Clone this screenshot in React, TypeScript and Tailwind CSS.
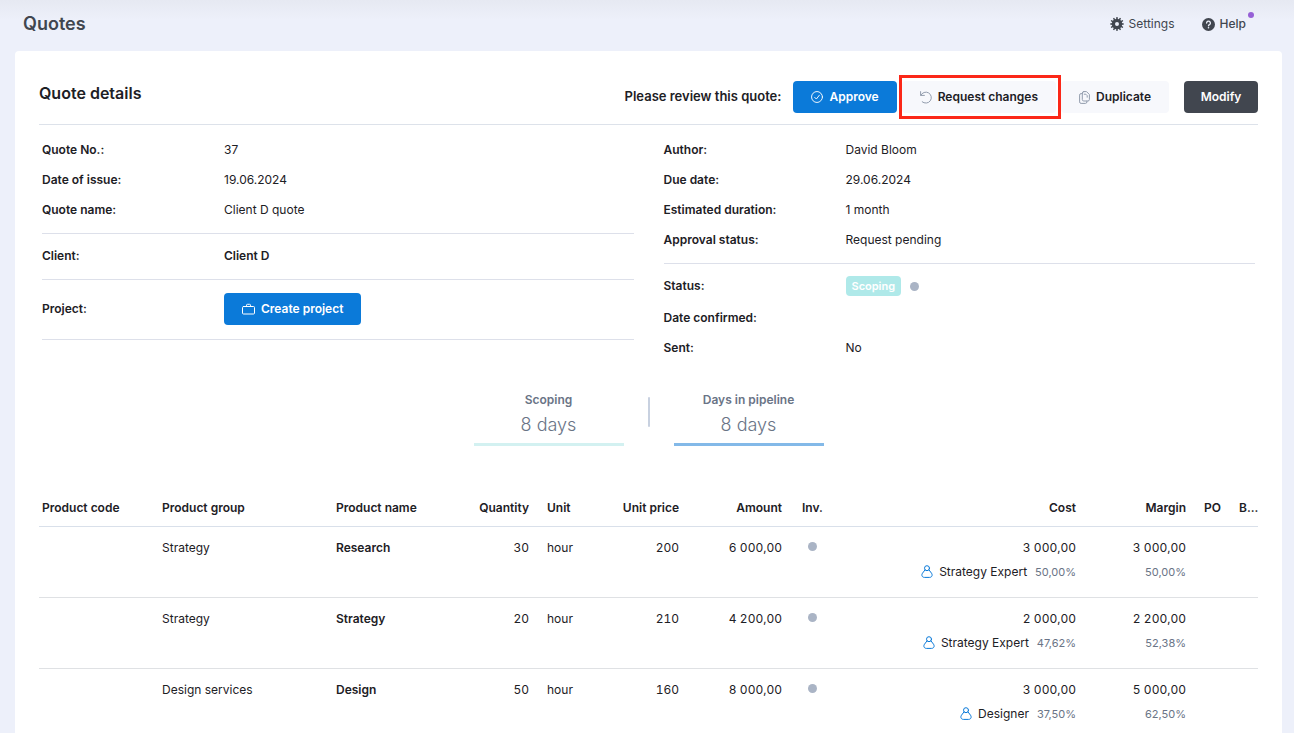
import type { ReactNode } from "react";

const iconProps = {
  fill: "none",
  stroke: "currentColor",
  strokeLinecap: "round" as const,
  strokeLinejoin: "round" as const,
  "aria-hidden": true,
};

function GearIcon() {
  const teeth = [0, 30, 60, 90, 120, 150, 180, 210, 240, 270, 300, 330];
  return (
    <svg width="14" height="14" viewBox="0 0 14 14" fill="none" aria-hidden="true">
      <circle cx="7" cy="7" r="3.6" stroke="currentColor" strokeWidth="3.2" />
      {teeth.map((a) => (
        <path key={a} d="M6.1 2.4 6.4 0.1h1.200L7.900 2.400z" fill="currentColor" transform={`rotate(${a} 7 7)`} />
      ))}
    </svg>
  );
}

function HelpIcon() {
  return (
    <svg width="13" height="13" viewBox="0 0 13 13" {...iconProps}>
      <circle cx="6.5" cy="6.5" r="6.5" fill="currentColor" stroke="none" />
      <path d="M4.6 5a1.9 1.9 0 1 1 2.9 1.6c-.7.4-1 .6-1 1.2" stroke="#edf0fa" strokeWidth="1.3" />
      <circle cx="6.5" cy="9.8" r=".8" fill="#edf0fa" stroke="none" />
    </svg>
  );
}

function CheckIcon() {
  return (
    <svg width="12" height="12" viewBox="0 0 13 13" {...iconProps}>
      <circle cx="6.5" cy="6.5" r="5.9" />
      <path d="M4 6.9 5.8 8.7 9.1 4.5" />
    </svg>
  );
}

function UndoIcon() {
  return (
    <svg width="12" height="13" viewBox="0 0 12 13" {...iconProps}>
      <path d="M.6.6v3.800h3.800" />
      <path d="M.8 4.300A5.500 5.500 0 1 1 2.200 10.800" />
    </svg>
  );
}

function CopyIcon() {
  return (
    <svg width="11" height="13" viewBox="0 0 11 13" {...iconProps}>
      <path d="M3.3 2.6H2.1A1.5 1.5 0 0 0 .6 4.100v6.800a1.500 1.500 0 0 0 1.500 1.500h4.300a1.500 1.500 0 0 0 1.500-1.500v-.8" />
      <path d="M4.800.6h2.700l2.900 2.900v5a1.500 1.500 0 0 1-1.500 1.500H4.800a1.500 1.500 0 0 1-1.500-1.500V2.100A1.500 1.500 0 0 1 4.800.6z" />
      <path d="M5.200 3.200h1.600l1.400 1.400v1.600" />
    </svg>
  );
}

function BriefcaseIcon() {
  return (
    <svg width="13" height="12" viewBox="0 0 13 12" {...iconProps}>
      <rect x=".5" y="3.500" width="12" height="7.500" rx="1" />
      <path d="M4.500 3.400V2.200c0-.6.300-.9.900-.9h2.200c.6 0 .9.300.9.900v1.200" />
    </svg>
  );
}

function PersonIcon() {
  return (
    <svg width="12" height="13" viewBox="0 0 12 13" {...iconProps} className="text-[#0b7ad9]">
      <circle cx="6" cy="3.200" r="2.500" />
      <path d="M4 4.900 1.500 8.200C.1 10.200 1.200 12.400 3.400 12.400h5.200c2.200 0 3.300-2.200 1.900-4.200L8 4.900" />
    </svg>
  );
}

function Dot() {
  return <span className="inline-block size-[9px] shrink-0 rounded-full bg-[#aab4c5]" />;
}

function Field({ label, children }: { label: string; children?: ReactNode }) {
  return (
    <div className="flex min-h-[30px] items-center">
      <dt className="w-[182px] shrink-0 font-semibold">{label}</dt>
      <dd className="flex items-center">{children}</dd>
    </div>
  );
}

function Stat({ label, value, line }: { label: string; value: string; line: string }) {
  return (
    <div className={`w-[150px] border-b-[3px] pb-[3px] text-center text-[#6a7486] ${line}`}>
      <p className="leading-5 font-semibold">{label}</p>
      <p className="text-lg leading-[30px] font-light">{value}</p>
    </div>
  );
}

const subtleButton = "flex h-8 items-center gap-[6px] rounded bg-[#f7f8fc] px-[18px] font-semibold";
const primaryButton = "flex h-8 items-center gap-[6px] rounded bg-[#0b7ad9] px-[18px] font-semibold text-white";

const rows = [
  { group: "Strategy", name: "Research", qty: "30", unit: "hour", price: "200", amount: "6 000,00", cost: "3 000,00", role: "Strategy Expert", costPct: "50,00%", margin: "3 000,00", marginPct: "50,00%" },
  { group: "Strategy", name: "Strategy", qty: "20", unit: "hour", price: "210", amount: "4 200,00", cost: "2 000,00", role: "Strategy Expert", costPct: "47,62%", margin: "2 200,00", marginPct: "52,38%" },
  { group: "Design services", name: "Design", qty: "50", unit: "hour", price: "160", amount: "8 000,00", cost: "3 000,00", role: "Designer", costPct: "37,50%", margin: "5 000,00", marginPct: "62,50%" },
];

export default function App() {
  return (
    <div className="flex h-screen flex-col overflow-hidden bg-[#edf0fa] bg-[linear-gradient(#e6e9f2,#edf0fa_20px)] font-['Inter',sans-serif] text-xs text-[#1d2025]">
      <header className="flex h-[51px] shrink-0 items-center justify-between pr-12 pb-[3px] pl-[23px] text-[#41464f]">
        <h1 className="text-lg font-semibold">Quotes</h1>
        <nav className="flex items-center gap-[27px]">
          <a href="#settings" className="flex items-center gap-[5px]">
            <GearIcon />
            Settings
          </a>
          <a href="#help" className="relative flex items-center gap-[5px] font-medium">
            <HelpIcon />
            Help
            <span className="absolute -top-[4px] -right-[8px] size-[6px] rounded-full bg-[#9660d6]" />
          </a>
        </nav>
      </header>

      <main className="mr-3 ml-[15px] grow rounded-t bg-white px-6 pt-[30px]">
        <div className="flex items-center justify-between border-b border-[#dde2ea] pb-[11px]">
          <h2 className="pb-2 text-base font-semibold">Quote details</h2>
          <div className="flex items-center gap-[5px]">
            <span className="mr-[7px] text-[13px] font-semibold">Please review this quote:</span>
            <button type="button" className={primaryButton}>
              <CheckIcon />
              Approve
            </button>
            <div className="relative">
              <button type="button" className={subtleButton}>
                <span className="text-[#929cad]"><UndoIcon /></span>
                Request changes
              </button>
              <span className="pointer-events-none absolute -inset-y-[6px] -right-[5px] -left-[3px] border-[3px] border-[#fb2718]" />
            </div>
            <button type="button" className={subtleButton}>
              <span className="text-[#929cad]"><CopyIcon /></span>
              Duplicate
            </button>
            <button type="button" className="ml-[10px] h-8 w-[74px] rounded bg-[#41464f] font-semibold text-white">
              Modify
            </button>
          </div>
        </div>

        <div className="grid grid-cols-2 gap-[30px] px-[3px] pt-[10px]">
          <dl>
            <div className="border-b border-[#dde0ea] pb-2">
              <Field label="Quote No.:">37</Field>
              <Field label="Date of issue:">19.06.2024</Field>
              <Field label="Quote name:">Client D quote</Field>
            </div>
            <div className="border-b border-[#dde0ea] pt-[7px] pb-2">
              <Field label="Client:">
                <span className="font-semibold">Client D</span>
              </Field>
            </div>
            <div className="border-b border-[#dde0ea] pt-[13px] pb-[14px]">
              <Field label="Project:">
                <button type="button" className={primaryButton}>
                  <BriefcaseIcon />
                  Create project
                </button>
              </Field>
            </div>
          </dl>
          <dl>
            <div className="border-b border-[#dde0ea] pb-2">
              <Field label="Author:">David Bloom</Field>
              <Field label="Due date:">29.06.2024</Field>
              <Field label="Estimated duration:">1 month</Field>
              <Field label="Approval status:">Request pending</Field>
            </div>
            <div className="pt-[7px]">
              <div className="pb-[2px]">
                <Field label="Status:">
                  <span className="mr-[9px] rounded bg-[#afe9e9] px-[6px] text-[11px] leading-5 font-semibold text-white">Scoping</span>
                  <Dot />
                </Field>
              </div>
              <Field label="Date confirmed:" />
              <Field label="Sent:">No</Field>
            </div>
          </dl>
        </div>

        <section className="mt-[27px] flex items-start justify-center gap-6">
          <Stat label="Scoping" value="8 days" line="border-[#d3f1f1]" />
          <span className="mt-[7px] h-[30px] w-[2px] rounded bg-[#c8d1e0]" />
          <Stat label="Days in pipeline" value="8 days" line="border-[#83b9e8]" />
        </section>

        <table className="mt-11 w-full table-fixed text-left [&_td]:px-[9px] [&_td]:align-top [&_td:first-child]:pl-[3px] [&_th]:px-[9px] [&_th]:font-semibold [&_th:first-child]:pl-[3px] [&_th:last-child]:pr-0">
          <colgroup>
            <col className="w-[114px]" />
            <col className="w-[174px]" />
            <col className="w-[133px]" />
            <col className="w-[78px]" />
            <col className="w-[50px]" />
            <col className="w-[100px]" />
            <col className="w-[105px]" />
            <col className="w-[42px]" />
            <col />
            <col className="w-[110px]" />
            <col className="w-[35px]" />
            <col className="w-[28px]" />
          </colgroup>
          <thead>
            <tr className="h-[36px] border-b border-[#d9e0ea] whitespace-nowrap">
              <th>Product code</th>
              <th>Product group</th>
              <th>Product name</th>
              <th className="text-right">Quantity</th>
              <th>Unit</th>
              <th className="text-right">Unit price</th>
              <th className="pr-[11px]! text-right">Amount</th>
              <th>Inv.</th>
              <th className="text-right">Cost</th>
              <th className="text-right">Margin</th>
              <th>PO</th>
              <th>B...</th>
            </tr>
          </thead>
          <tbody className="leading-6">
            {rows.map((r) => (
              <tr key={r.name} className="h-[71px] border-b border-[#dfe1e4] [&>td]:pt-[9px]">
                <td />
                <td>{r.group}</td>
                <td className="font-semibold">{r.name}</td>
                <td className="text-right tabular-nums">{r.qty}</td>
                <td>{r.unit}</td>
                <td className="text-right tabular-nums">{r.price}</td>
                <td className="pr-[11px]! text-right tabular-nums">{r.amount}</td>
                <td>
                  <span className="flex h-[22px] items-center pl-[6px]"><Dot /></span>
                </td>
                <td className="text-right">
                  <div className="tabular-nums">{r.cost}</div>
                  <div className="flex items-center justify-end">
                    <PersonIcon />
                    <span className="mr-2 ml-[6px]">{r.role}</span>
                    <span className="text-[11px] text-[#6a7486]">{r.costPct}</span>
                  </div>
                </td>
                <td className="text-right">
                  <div className="tabular-nums">{r.margin}</div>
                  <div className="text-[11px] text-[#6a7486]">{r.marginPct}</div>
                </td>
                <td />
                <td />
              </tr>
            ))}
          </tbody>
        </table>
      </main>
    </div>
  );
}
